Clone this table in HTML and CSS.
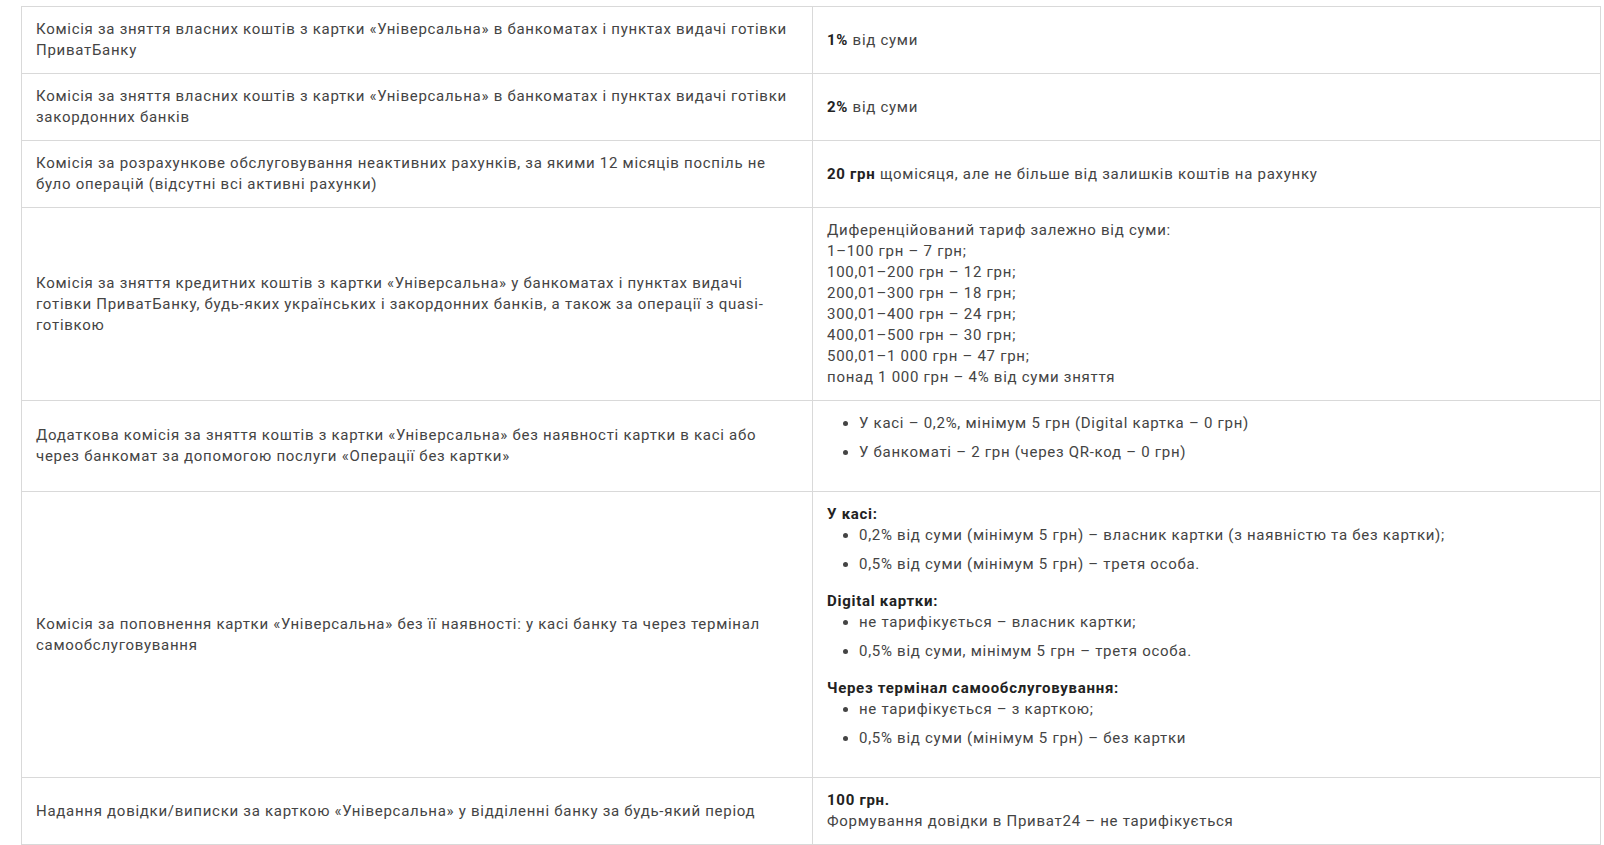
FILE: index.html
```html
<!DOCTYPE html>
<html lang="uk">
<head>
<meta charset="utf-8">
<title>Тарифи</title>
<link rel="stylesheet" href="styles.css">
</head>
<body>
<div class="wrap">
<table class="tariffs">
  <colgroup><col class="c-name"><col class="c-value"></colgroup>
  <tbody>
    <tr>
      <td>Комісія за зняття власних коштів з картки «Універсальна» в банкоматах і пунктах видачі готівки ПриватБанку</td>
      <td><b>1%</b> від суми</td>
    </tr>
    <tr>
      <td>Комісія за зняття власних коштів з картки «Універсальна» в банкоматах і пунктах видачі готівки закордонних банків</td>
      <td><b>2%</b> від суми</td>
    </tr>
    <tr>
      <td>Комісія за розрахункове обслуговування неактивних рахунків, за якими 12 місяців поспіль не було операцій (відсутні всі активні рахунки)</td>
      <td><b>20 грн</b> щомісяця, але не більше від залишків коштів на рахунку</td>
    </tr>
    <tr>
      <td>Комісія за зняття кредитних коштів з картки «Універсальна» у банкоматах і пунктах видачі готівки ПриватБанку, будь-яких українських і закордонних банків, а також за операції з quasi-готівкою</td>
      <td>Диференційований тариф залежно від суми:<br>1–100 грн – 7 грн;<br>100,01–200 грн – 12 грн;<br>200,01–300 грн – 18 грн;<br>300,01–400 грн – 24 грн;<br>400,01–500 грн – 30 грн;<br>500,01–1 000 грн – 47 грн;<br>понад 1 000 грн – 4% від суми зняття</td>
    </tr>
    <tr>
      <td>Додаткова комісія за зняття коштів з картки «Універсальна» без наявності картки в касі або через банкомат за допомогою послуги «Операції без картки»</td>
      <td>
        <ul class="list">
          <li>У касі – 0,2%, мінімум 5 грн (Digital картка – 0 грн)</li>
          <li>У банкоматі – 2 грн (через QR-код – 0 грн)</li>
        </ul>
      </td>
    </tr>
    <tr>
      <td>Комісія за поповнення картки «Універсальна» без її наявності: у касі банку та через термінал самообслуговування</td>
      <td>
        <p class="head">У касі:</p>
        <ul class="list">
          <li>0,2% від суми (мінімум 5 грн) – власник картки (з наявністю та без картки);</li>
          <li>0,5% від суми (мінімум 5 грн) – третя особа.</li>
        </ul>
        <p class="head">Digital картки:</p>
        <ul class="list">
          <li>не тарифікується – власник картки;</li>
          <li>0,5% від суми, мінімум 5 грн – третя особа.</li>
        </ul>
        <p class="head">Через термінал самообслуговування:</p>
        <ul class="list">
          <li>не тарифікується – з карткою;</li>
          <li>0,5% від суми (мінімум 5 грн) – без картки</li>
        </ul>
      </td>
    </tr>
    <tr>
      <td>Надання довідки/виписки за карткою «Універсальна» у відділенні банку за будь-який період</td>
      <td><b>100 грн.</b><br>Формування довідки в Приват24 – не тарифікується</td>
    </tr>
  </tbody>
</table>
</div>
</body>
</html>
```
FILE: styles.css
```css
html, body {
  margin: 0;
  padding: 0;
  background: #ffffff;
}
body {
  font-family: Roboto, "Noto Sans", Arial, sans-serif;
  font-size: 15px;
  line-height: 21px;
  letter-spacing: 0.72px;
  color: #444444;
}
.wrap {
  padding: 6px 4px 0 21px;
}
.tariffs {
  width: 1580px;
  border-collapse: collapse;
  table-layout: fixed;
}
.c-name { width: 791px; }
.tariffs td {
  border: 1px solid #d9d9d9;
  padding: 12px 14px;
  vertical-align: middle;
}
.tariffs b {
  font-weight: 700;
  color: #222222;
}
.head {
  margin: 0;
  font-weight: 700;
  color: #222222;
}
.list {
  margin: 0 0 16px;
  padding-left: 32px;
}
.list li {
  margin-bottom: 8px;
}
```
